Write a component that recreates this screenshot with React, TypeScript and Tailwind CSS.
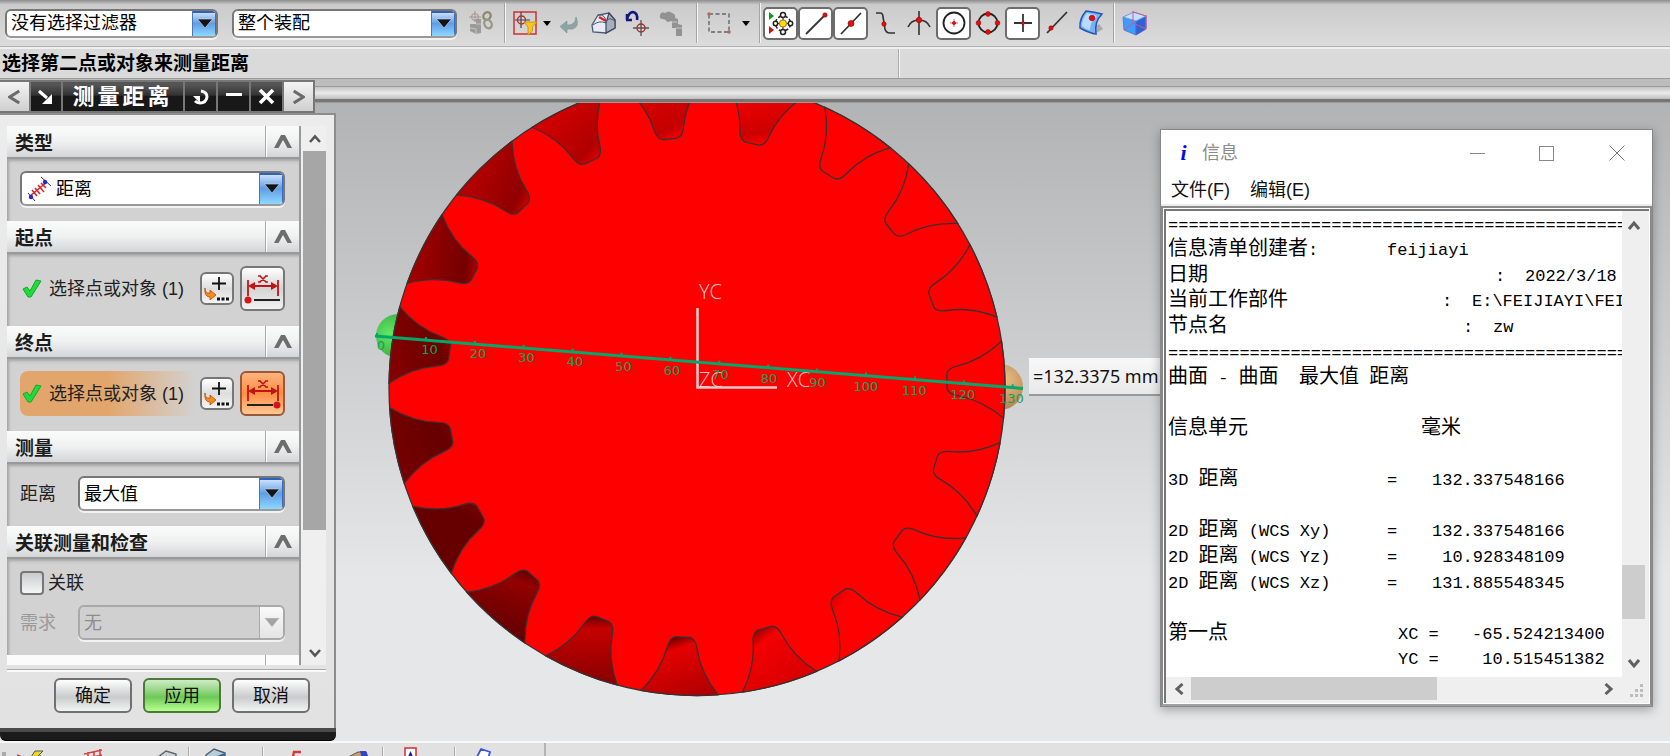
import React from 'react';

const UI_FONT = 'font-[Liberation_Sans,Noto_Sans_CJK_SC,sans-serif]';

/* ---------- gear data ---------- */

const TEETH = 19;
const STEP = 360 / TEETH;
const GAP_PATH =
  'M-38.5,-305.6 Q-20,-285 -15,-261 Q-13,-251 -7,-250 L7,-250 Q13,-251 15,-261 Q20,-285 38.5,-305.6 A308,308 0 0 0 -38.5,-305.6 Z';

// [rim, near root, root]
const GAP_SHADES: [string, string, string][] = [
  ['#860000', '#6c0000', '#880000'],
  ['#a00000', '#740000', '#b00000'],
  ['#b60000', '#900000', '#cc0000'],
  ['#d20000', '#b00000', '#e00000'],
  ['#e00000', '#c40000', '#f80000'],
  ['#ff0000', '#cc0000', '#ff0000'],
  ['#ff0000', '#ff0000', '#ff0000'],
  ['#ff0000', '#ff0000', '#ff0000'],
  ['#ff0000', '#ff0000', '#ff0000'],
  ['#ff0000', '#ff0000', '#ff0000'],
  ['#ff0000', '#ff0000', '#ff0000'],
  ['#ff0000', '#ff0000', '#f80000'],
  ['#ff0000', '#ff0000', '#d80000'],
  ['#d80000', '#f40000', '#900000'],
  ['#b00000', '#e60000', '#600000'],
  ['#8c0000', '#c60000', '#600000'],
  ['#660000', '#940000', '#600000'],
  ['#660000', '#660000', '#780000'],
  ['#760000', '#660000', '#720000'],
];

const RULER = Array.from({ length: 14 }, (_, i) => i * 10);

/* ---------- shared controls ---------- */

interface ComboProps {
  label: string;
  value: string;
  className?: string;
  icon?: React.ReactNode;
  disabled?: boolean;
}

const Combo: React.FC<ComboProps> = ({ label, value, className = '', icon, disabled }) => (
  <div
    className={`relative flex items-stretch rounded-md border-2 overflow-hidden shadow-[0_2px_0_#f2f2f2] ${
      disabled ? 'border-[#a9a9a9] bg-[#d0d0d0]' : 'border-[#777] border-b-[#999] bg-white'
    } ${className}`}
  >
    {icon && <span className="flex items-center pl-1">{icon}</span>}
    <select
      aria-label={label}
      disabled={disabled}
      className={`flex-1 min-w-0 appearance-none bg-transparent outline-none pl-1 text-lg leading-none ${
        disabled ? 'text-[#8d8d8d]' : 'text-black'
      }`}
    >
      <option>{value}</option>
    </select>
    <span
      className={`pointer-events-none w-6 flex items-center justify-center border-l ${
        disabled
          ? 'border-[#aaa] bg-linear-to-b from-[#fafafa] to-[#e4e4e4]'
          : 'border-[#4778b8] bg-linear-to-b from-[#dce9fb] via-[#5f9ee6] via-50% to-[#8fd8ff] shadow-[inset_0_2px_0_#2f62bd,inset_-1px_0_0_#3a6cc0]'
      }`}
    >
      <svg width="16" height="11" viewBox="0 0 16 11">
        <path d="M0.5 1H15.5L8 10Z" fill={disabled ? '#a3a3a3' : '#141414'} stroke={disabled ? '#ddd' : '#cfe4fb'} strokeWidth="0.6" />
      </svg>
    </span>
  </div>
);

const Separator = () => <span className="w-[2px] h-10 border-l border-[#a5a5a5] bg-[#f4f4f4] shrink-0" />;

const MenuArrow = () => (
  <button aria-label="更多" className="w-[10px] flex justify-center">
    <svg width="8" height="5" viewBox="0 0 10 6">
      <path d="M0 0H10L5 6Z" fill="#000" />
    </svg>
  </button>
);

interface ToolProps {
  name: string;
  active?: boolean;
  children: React.ReactNode;
}

const Tool: React.FC<ToolProps> = ({ name, active, children }) => (
  <button
    aria-label={name}
    className={`shrink-0 flex items-center justify-center h-[33px] ${
      active ? 'w-[35px] rounded-[5px] border-2 border-[#6c6c6c] bg-white' : 'w-[34px]'
    }`}
  >
    <svg width="26" height="26" viewBox="0 0 26 26" fill="none" className="shrink-0">
      {children}
    </svg>
  </button>
);

const Dot = ({ x, y, r = 2.8 }: { x: number; y: number; r?: number }) => (
  <circle cx={x} cy={y} r={r} fill="#e01010" stroke="#a00000" strokeWidth="0.6" />
);

/* ---------- top bars ---------- */

const SelectionBar = () => (
  <div className="flex items-center h-[47px] pl-[5px] bg-linear-to-b from-[#8e8e8e] via-[#cbcbcb] via-10% to-[#dcdcdc] border-b border-[#b0b0b0]">
    <Combo label="选择过滤器" value="没有选择过滤器" className="w-[213px] h-[29px] mr-[14px]" />
    <Combo label="选择范围" value="整个装配" className="w-[225px] h-[29px]" />
    <div className="w-[47px] flex justify-center">
      <Tool name="装配范围">
        <path d="M2 14H8V9H13V23L8 24L2 21Z" fill="#9b9b9b" />
        <path d="M2 18L8 19V24M8 14H13" stroke="#c4c4c4" />
        <circle cx="7" cy="7" r="3.5" stroke="#b88" />
        <path d="M7 1V12M1 7H13" stroke="#999" />
        <ellipse cx="19" cy="6" rx="3.500" ry="4" stroke="#8b8b72" strokeWidth="2.400" transform="rotate(30 19 6)" />
        <ellipse cx="20" cy="14" rx="3.500" ry="4.500" stroke="#9a9a84" strokeWidth="2.400" transform="rotate(-30 20 14)" />
      </Tool>
    </div>
    <Separator />
    <span className="w-[2px]" />
    <Tool name="常规选择过滤器">
      <rect x="2" y="2" width="22" height="22" stroke="#d03a3a" strokeWidth="1.6" />
      <path d="M9 2V18M3 10H18" stroke="#444" strokeWidth="1.2" />
      <circle cx="9.500" cy="10" r="4" stroke="#b03030" strokeWidth="1.4" />
      <path d="M12 12H25L20.500 17V21L16 25V17Z" fill="#f7c51e" stroke="#c58e08" strokeWidth="0.8" />
    </Tool>
    <MenuArrow />
    <Tool name="返回">
      <path d="M20 7Q24 16 17 19H11V23L4 16.500L11 11V15Q19 16 20 7Z" fill="#92a3a3" stroke="#7e9090" strokeWidth="0.6" />
    </Tool>
    <Tool name="面">
      <path d="M2 15L8 5L19 3L25 10V18L16 23L3 22Z" fill="#e6ebf5" stroke="#4b5872" strokeWidth="1.3" />
      <path d="M16 23V13L19 3L25 10V18Z" fill="#a5afbe" stroke="#3c4557" strokeWidth="1.200" />
      <path d="M16 13Q17 8 21 9L25 11M16 13Q9 10 3 15M8 5Q16 4 16 13" stroke="#4b5872" />
      <path d="M9 7L16 11" stroke="#e02424" strokeWidth="2.400" />
    </Tool>
    <Tool name="撤销定位">
      <path d="M2 10H8M3 10V4M3 9Q5 2 9 2Q14 3 13 10" stroke="#15157c" strokeWidth="2.600" />
      <circle cx="17" cy="18" r="4" stroke="#c02020" strokeWidth="1.400" />
      <path d="M17 10V26M9 18H25" stroke="#555" strokeWidth="1.300" />
    </Tool>
    <Tool name="路径">
      <path d="M2 5Q3 1 7 3Q11 0 14 3Q18 4 17 8L20 9V14L24 15V26H18V18H14V11L9 12Q8 9 4 9Q1 8 2 5Z" fill="#929292" />
      <path d="M14 12H19M18 18H24" stroke="#c4c4c4" />
    </Tool>
    <span className="w-2" />
    <Separator />
    <span className="w-1" />
    <Tool name="矩形选择">
      <rect x="3" y="4" width="20" height="18" stroke="#666" strokeWidth="1.400" strokeDasharray="4 2.500" />
      <circle cx="3" cy="4" r="1.800" fill="#b66" />
      <circle cx="23" cy="22" r="1.800" fill="#b66" />
    </Tool>
    <span className="w-[5px]" />
    <MenuArrow />
    <span className="w-2" />
    <Separator />
    <span className="w-[2px]" />
    <Tool name="捕捉点" active>
      <path d="M1 2L6 6L1 10Z" fill="#0a9a20" />
      <path d="M1 16L6 20L1 24Z" fill="#d01010" />
      <path d="M15 3V24M5 13.500H25" stroke="#333" strokeWidth="1.200" />
      <circle cx="15" cy="13.500" r="7.500" stroke="#222" strokeWidth="1.500" strokeDasharray="4 2" />
      <circle cx="15" cy="13.500" r="3.600" fill="#ffd91c" stroke="#a07800" />
      <circle cx="15" cy="5" r="2.500" fill="#fff" stroke="#222" strokeWidth="1.500" />
      <circle cx="15" cy="22" r="2.500" fill="#fff" stroke="#222" strokeWidth="1.500" />
      <circle cx="7.500" cy="13.500" r="2.200" fill="#fff" stroke="#222" strokeWidth="1.500" />
      <circle cx="22.500" cy="13.500" r="2.200" fill="#fff" stroke="#222" strokeWidth="1.500" />
    </Tool>
    <Tool name="端点" active>
      <path d="M3 24L22 5" stroke="#333" strokeWidth="1.800" />
      <Dot x={22} y={5} r={2.2} />
    </Tool>
    <Tool name="中点" active>
      <path d="M3 24L23 3" stroke="#333" strokeWidth="1.800" />
      <Dot x={13} y={13.5} r={3} />
    </Tool>
    <Tool name="控制点">
      <path d="M4 3H8Q11 3 11 7L13 19Q14 23 18 23H23" stroke="#333" strokeWidth="1.600" />
      <Dot x={12} y={14} r={2.2} />
    </Tool>
    <Tool name="交点">
      <path d="M13 1V25M2 17Q5 10 13 10Q21 10 24 17" stroke="#333" strokeWidth="1.600" />
      <Dot x={13} y={10} r={2.8} />
    </Tool>
    <Tool name="圆弧中心" active>
      <circle cx="13" cy="13" r="10.500" stroke="#222" strokeWidth="1.800" />
      <path d="M13 9V17M9 13H17" stroke="#c33" strokeWidth="0.8" />
      <Dot x={13} y={13} r={1.6} />
    </Tool>
    <Tool name="象限点">
      <circle cx="13" cy="13" r="9.500" stroke="#222" strokeWidth="1.800" />
      <Dot x={13} y={4} r={2.4} />
      <Dot x={13} y={22} r={2.4} />
      <Dot x={3.5} y={13} r={2.4} />
      <Dot x={22.5} y={13} r={2.4} />
    </Tool>
    <Tool name="现有点" active>
      <path d="M13 4V22M4 13H22" stroke="#333" strokeWidth="1.800" />
      <Dot x={13} y={13} r={1.6} />
    </Tool>
    <Tool name="曲线上的点">
      <path d="M3 23L23 2" stroke="#333" strokeWidth="1.800" />
      <Dot x={7} y={18} r={2.2} />
    </Tool>
    <Tool name="面上的点">
      <path d="M15 25L25 19L21 14L12 20Z" fill="#aaa" />
      <path d="M8 1Q17 2 24 4Q16 12 18 24Q11 23 2 18Q1 9 8 1Z" fill="#78b2f4" stroke="#2755b4" strokeWidth="1.500" />
      <path d="M9 3Q15 4 19 6Q12 12 12 20Q7 19 4 16Q4 9 9 3Z" fill="#b8dbff" />
      <Dot x={14} y={8} r={2.8} />
    </Tool>
    <span className="w-[5px]" />
    <Separator />
    <span className="w-[3px]" />
    <Tool name="小平面">
      <path d="M1 7L14 11V25L2 20Z" fill="#3c9cff" stroke="#5a7cd8" />
      <path d="M14 11L24 6V19L14 25Z" fill="#2c62d8" stroke="#5a64c8" />
      <path d="M1 7L12 2L24 6L14 11Z" fill="#c0e2ff" stroke="#7a94d8" />
      <path d="M11 1V13L24 19M24 5V19M11 13L2 20M11 2L24 6" stroke="#d0568c" />
    </Tool>
  </div>
);

const PromptBar = () => (
  <>
    <div className="flex h-[31px] border-t-2 border-[#efefef] bg-[#dadada]">
      <div className="w-[899px] border-r border-[#aaa] pl-[2px] flex items-center">
        <p className="text-[19px] leading-6 font-bold text-black whitespace-nowrap">选择第二点或对象来测量距离</p>
      </div>
      <div className="flex-1 border-l border-[#f6f6f6]" />
    </div>
    <div className="h-[9px] bg-[#bdbdbd] border-y border-[#999]" />
    <div className="h-3 bg-linear-to-b from-[#c4c4c4] via-[#ebebeb] to-[#bebebe]" />
    <div className="h-1 bg-[#777] border-b border-[#9a9a9a]" />
  </>
);

/* ---------- graphics area ---------- */

const Gear = () => (
  <svg width="1200" height="638" viewBox="0 103 1200 638" className="block">
    <defs>
      <radialGradient id="startBall" cx="0.3" cy="0.45" r="0.6">
        <stop offset="0" stopColor="#62ea62" />
        <stop offset="1" stopColor="#3aa844" />
      </radialGradient>
      <radialGradient id="endBall" cx="0.6" cy="0.35" r="0.6">
        <stop offset="0" stopColor="#e8c088" />
        <stop offset="1" stopColor="#b98652" />
      </radialGradient>
      {GAP_SHADES.map(([rim, near, root], i) => (
        <linearGradient key={i} id={`gap${i}`} gradientUnits="userSpaceOnUse" x1="-20" y1="-308" x2="4" y2="-248">
          <stop offset="0" stopColor={rim} />
          <stop offset="0.8" stopColor={near} />
          <stop offset="1" stopColor={root} />
        </linearGradient>
      ))}
    </defs>
    <circle cx="398" cy="336" r="22" fill="url(#startBall)" />
    <circle cx="1000" cy="387" r="23" fill="url(#endBall)" />
    <g transform="translate(697 387.5)">
      <circle r="308" fill="#ff0000" stroke="#333" strokeWidth="1.3" />
      {GAP_SHADES.map((_, i) => (
        <path
          key={i}
          d={GAP_PATH}
          transform={`rotate(${-82 + i * STEP})`}
          fill={`url(#gap${i})`}
          stroke="#3a3030"
          strokeWidth="1.3"
        />
      ))}
    </g>
    <path d="M697.5 308V387.500H777" fill="none" stroke="#dcc8c8" strokeWidth="2.600" />
    <g className="font-[Open_Sans,sans-serif] font-light" fontSize="20" fill="#f0cccc">
      <text x="699" y="299">YC</text>
      <text x="699" y="387">ZC</text>
      <text x="787" y="387">XC</text>
    </g>
    <path d="M375 336L1023 388.500" stroke="#00a86b" strokeWidth="3" />
    <g className="font-[DejaVu_Sans,sans-serif]" fontSize="13" textAnchor="middle" fill="#12a05c">
      {RULER.map((n, i) => (
        <g key={n}>
          <path d={`M${377 + i * 48.9} ${336 + i * 3.95}v-3`} stroke="#00a86b" strokeWidth="2" />
          <text x={381 + i * 48.5} y={350 + i * 4.1}>{n}</text>
        </g>
      ))}
    </g>
  </svg>
);

/* ---------- measure dialog ---------- */

interface SectionProps {
  title: string;
  children: React.ReactNode;
}

const Section: React.FC<SectionProps> = ({ title, children }) => (
  <section>
    <header className="flex h-[33px] border-b-2 border-[#999] bg-linear-to-b from-[#fbfbfb] via-[#eff1f1] to-[#d3d5d7]">
      <h2 className="flex-1 pl-2 pt-1 flex items-center text-[19px] leading-6 font-bold text-[#1c1c1c]">{title}</h2>
      <button aria-label={`折叠${title}`} className="w-[34px] border-l border-[#aaa] flex items-center justify-center shadow-[inset_1px_0_0_#fff]">
        <svg width="18" height="14" viewBox="0 0 18 14">
          <path d="M0 13L7 0H11L18 13H13.500L9 5L4.500 13Z" fill="#6d6d6d" />
        </svg>
      </button>
    </header>
    <div className="pt-3 pb-[15px] pl-[13px] pr-[14px] bg-[#d2d2d2] shadow-[inset_2px_2px_3px_#a4a4a4]">{children}</div>
  </section>
);

const CheckMark = () => (
  <svg width="20" height="20" viewBox="0 0 20 20" className="shrink-0">
    <path d="M1 10L5 8L8 12L14 1L19 2L9 18H6Z" fill="#1fdc3a" stroke="#12a82a" />
  </svg>
);

const PickRow = ({ active }: { active?: boolean }) => (
  <div className="flex items-center h-[45px]">
    <div
      className={`flex flex-1 items-center gap-[7px] h-full pl-[2px] rounded-lg whitespace-nowrap ${
        active ? 'bg-linear-to-r from-[#e2a66c] from-50% to-transparent' : ''
      }`}
    >
      <CheckMark />
      <span className="text-lg leading-6 text-[#222]">选择点或对象 (1)</span>
    </div>
    <button aria-label="点构造器" className="w-[34px] h-[33px] ml-1 mr-[6px] rounded-md border-2 border-[#777] bg-linear-to-b from-white via-[#ddd] to-[#f4f4f4]">
      <svg width="30" height="29" viewBox="0 0 30 29">
        <path d="M17 3V16M10 9.500H24" stroke="#111" strokeWidth="1.800" />
        <path d="M3 14Q3 20 8 19V16L14 21L8 26V23Q2 23 3 14Z" fill="#f58a1e" stroke="#b84a00" strokeWidth="0.8" />
        <path d="M15 25H18M19.500 25H22.500M24 25H27" stroke="#111" strokeWidth="3" />
      </svg>
    </button>
    <button
      aria-label={active ? '终点' : '起点'}
      className={`w-[45px] h-[45px] rounded-md border-2 ${
        active
          ? 'border-[#9a5a3a] bg-linear-to-b from-[#ffb27c] via-[#ff8f45] to-[#ffc793]'
          : 'border-[#777] bg-linear-to-b from-white via-[#d4d4d4] to-[#f2f2f2]'
      }`}
    >
      <svg width="41" height="41" viewBox="0 0 41 41" fill="none">
        <path d="M6 12V28M36 12V28M8 18H34" stroke="#c01414" strokeWidth="1.800" />
        <path d="M6 18L13 14V22ZM36 18L29 14V22Z" fill="#c01414" />
        <path d="M18 8L24 14M24 8L18 14M16 8H19M23 8H26M16 14H19M23 14H26" stroke="#c01414" strokeWidth="1.600" />
        <path d={active ? 'M5 32H31' : 'M12 32H38'} stroke="#222" strokeWidth="2" />
        <circle cx={active ? 35 : 6} cy="32" r="3.500" fill="#d81414" />
      </svg>
    </button>
  </div>
);

const DistanceIcon = () => (
  <svg width="26" height="26" viewBox="0 0 26 26" fill="none">
    <path d="M4 20L21 6M9 12L14 18M12 9L18 16M6 14L11 20M15 7L20 12" stroke="#d42a2a" strokeWidth="1.600" />
    <path d="M2 17L9 25M15 1L25 10" stroke="#333" />
    <circle cx="5" cy="21" r="2.200" fill="#2424d8" />
    <circle cx="19" cy="6" r="2.200" fill="#2424d8" />
  </svg>
);

const railDark = 'h-full flex items-center justify-center bg-linear-to-b from-[#555] from-10% via-[#333] via-45% to-[#181818] to-50% border-r-2 border-[#777]';
const railLight = 'h-full flex items-center justify-center bg-linear-to-b from-[#f4f4f4] to-[#cfcfcf]';

const DialogRail = () => (
  <div className="flex h-[33px] w-[315px] border-2 border-l-0 border-[#777]">
    <button aria-label="上一个" className={`${railLight} w-[31px] border-r-2 border-[#777]`}>
      <svg width="13" height="16" viewBox="0 0 15 18"><path d="M13 2L2 9L13 16" fill="none" stroke="#6a6a6a" strokeWidth="3.500" /></svg>
    </button>
    <button aria-label="固定" className={`${railDark} w-8`}>
      <svg width="16" height="16" viewBox="0 0 16 16"><path d="M1 2L9 9" stroke="#fff" strokeWidth="3" /><path d="M14 5V15H4Z" fill="#fff" /></svg>
    </button>
    <h1 className={`${railDark} flex-1 text-[22px] leading-none font-bold text-white gap-[3px] pr-1`}>
      <span>测</span><span>量</span><span>距</span><span>离</span>
    </h1>
    <button aria-label="重置" className={`${railDark} w-[33px]`}>
      <svg width="18" height="18" viewBox="0 0 18 18"><path d="M9 3Q15 4 15 9Q14 15 8 15Q5 15 3 13" fill="none" stroke="#fff" strokeWidth="3" /><path d="M1 8H8V15Z" fill="#fff" /></svg>
    </button>
    <button aria-label="最小化" className={`${railDark} w-[33px]`}>
      <span className="w-4 h-[3px] bg-white mb-1" />
    </button>
    <button aria-label="关闭" className={`${railDark} w-[33px]`}>
      <svg width="17" height="17" viewBox="0 0 17 17"><path d="M2 2L15 15M15 2L2 15" stroke="#fff" strokeWidth="3.600" /></svg>
    </button>
    <button aria-label="下一个" className={`${railLight} w-[29px]`}>
      <svg width="13" height="16" viewBox="0 0 15 18"><path d="M2 2L13 9L2 16" fill="none" stroke="#6a6a6a" strokeWidth="3.500" /></svg>
    </button>
  </div>
);

const actionButton = 'w-[78px] h-[35px] rounded-md border-2 text-lg leading-none text-[#111]';

const MeasureDialog = () => (
  <div className="absolute left-0 top-20 z-10">
    <DialogRail />
    <div className="w-[336px] border-t-2 border-r-2 border-[#8c8c8c] bg-linear-to-b from-[#ececec] to-[#e2e2e2] pt-[11px] pl-[7px] pr-2 pb-[15px]">
      <div className="flex h-[539px] overflow-hidden">
        <div className="flex-1 border-r-2 border-[#999]">
          <Section title="类型">
            <Combo label="类型" value="距离" icon={<DistanceIcon />} className="h-[35px]" />
          </Section>
          <Section title="起点">
            <PickRow />
          </Section>
          <Section title="终点">
            <PickRow active />
          </Section>
          <Section title="测量">
            <div className="flex items-center">
              <span className="w-[58px] text-lg leading-6 text-[#222]">距离</span>
              <Combo label="距离" value="最大值" className="flex-1 h-[35px]" />
            </div>
          </Section>
          <Section title="关联测量和检查">
            <label className="flex items-center gap-1 h-6 mb-[10px] text-lg leading-6 text-[#222]">
              <input type="checkbox" className="appearance-none w-6 h-6 rounded-[4px] border-2 border-[#777] bg-linear-to-b from-[#c9cbcd] to-[#f6f6f6]" />
              关联
            </label>
            <div className="flex items-center">
              <span className="w-[58px] text-lg leading-6 text-[#9a9a9a]">需求</span>
              <Combo label="需求" value="无" disabled className="flex-1 h-[35px]" />
            </div>
          </Section>
          <div className="flex h-[33px] justify-end bg-[#fbfbfb]">
            <span className="w-[34px] border-l border-[#aaa]" />
          </div>
        </div>
        <div className="w-[25px] pl-[2px] bg-[#efefef] flex flex-col items-center">
          <button aria-label="向上滚动" className="h-[25px]">
            <svg width="12" height="9" viewBox="0 0 12 9"><path d="M1 8L6 2.500L11 8" fill="none" stroke="#555" strokeWidth="2.600" /></svg>
          </button>
          <div className="w-[23px] h-[379px] bg-[#a6a6a6]" />
          <button aria-label="向下滚动" className="mt-auto h-6">
            <svg width="12" height="9" viewBox="0 0 12 9"><path d="M1 1L6 6.500L11 1" fill="none" stroke="#555" strokeWidth="2.600" /></svg>
          </button>
        </div>
      </div>
      <div className="mt-1 h-[3px] border-t border-[#aaa] bg-[#fafafa]" />
      <div className="flex justify-end gap-[11px] mt-[6px] pr-4">
        <button className={`${actionButton} border-[#707070] bg-linear-to-b from-white via-[#c9cbcc] via-55% to-[#f4f4f4]`}>确定</button>
        <button className={`${actionButton} border-[#4a7a3a] bg-linear-to-b from-[#cfeac6] via-[#6cc955] via-55% to-[#b8ff90]`}>应用</button>
        <button className={`${actionButton} border-[#707070] bg-linear-to-b from-white via-[#c9cbcc] via-55% to-[#f4f4f4]`}>取消</button>
      </div>
    </div>
    <div className="w-[336px] h-[13px] rounded-b-md bg-[#1b1b1b] border-t-4 border-t-[#4a4a4a] border-b border-b-black" />
  </div>
);

/* ---------- information window ---------- */

interface InfoLine {
  label?: string;
  labelWidth?: string;
  mark?: string;
  markWidth?: string;
  value?: string;
}

const RULE = '='.repeat(60);

const INFO_LINES: InfoLine[] = [
  { label: RULE },
  { label: '信息清单创建者:', labelWidth: 'w-[219px]', value: 'feijiayi' },
  { label: '日期', labelWidth: 'w-[327px]', mark: ':', markWidth: 'w-[30px]', value: '2022/3/18' },
  { label: '当前工作部件', labelWidth: 'w-[274px]', mark: ':', markWidth: 'w-[30px]', value: 'E:\\FEIJIAYI\\FEIJIAYI' },
  { label: '节点名', labelWidth: 'w-[295px]', mark: ':', markWidth: 'w-[30px]', value: 'zw' },
  { label: RULE },
  { label: '曲面 - 曲面  最大值 距离' },
  {},
  { label: '信息单元', labelWidth: 'w-[253px]', value: '毫米' },
  {},
  { label: '3D 距离', labelWidth: 'w-[219px]', mark: '=', markWidth: 'w-[45px]', value: '132.337548166' },
  {},
  { label: '2D 距离 (WCS Xy)', labelWidth: 'w-[219px]', mark: '=', markWidth: 'w-[45px]', value: '132.337548166' },
  { label: '2D 距离 (WCS Yz)', labelWidth: 'w-[219px]', mark: '=', markWidth: 'w-[45px]', value: ' 10.928348109' },
  { label: '2D 距离 (WCS Xz)', labelWidth: 'w-[219px]', mark: '=', markWidth: 'w-[45px]', value: '131.885548345' },
  {},
  { label: '第一点', labelWidth: 'w-[230px]', mark: 'XC =', markWidth: 'w-[74px]', value: '-65.524213400' },
  { label: '', labelWidth: 'w-[230px]', mark: 'YC =', markWidth: 'w-[74px]', value: ' 10.515451382' },
];

// CJK runs are set wider than the Latin ones, as in a two-cell terminal font
const Mixed = ({ text }: { text: string }) => (
  <>
    {text.split(/([\u4e00-\u9fff]+)/).map((run, i) => (
      <span key={i} className={i % 2 ? 'text-xl leading-none' : ''}>{run}</span>
    ))}
  </>
);

const InfoWindow = () => (
  <div className="absolute right-[17px] top-[129px] z-10 w-[493px] border border-[#888] bg-white shadow-[0_3px_10px_rgba(0,0,0,0.3)]">
    <div className="flex items-center h-[46px] pl-[10px]">
      <span className="w-[25px] text-center font-[Liberation_Serif,serif] text-[22px] leading-none font-bold italic text-[#0808f0] mr-[6px]">i</span>
      <h2 className="flex-1 text-lg leading-6 text-[#8c8c8c]">信息</h2>
      <button aria-label="最小化" className="w-[69px] h-10 flex items-center justify-center">
        <span className="w-[15px] h-px bg-[#888]" />
      </button>
      <button aria-label="最大化" className="w-[69px] h-10 flex items-center justify-center">
        <span className="w-[15px] h-[15px] border border-[#888]" />
      </button>
      <button aria-label="关闭" className="w-[71px] h-10 flex items-center justify-center">
        <svg width="16" height="16" viewBox="0 0 16 16"><path d="M0.5 0.5L15.500 15.500M15.500 0.5L0.5 15.500" stroke="#777" /></svg>
      </button>
    </div>
    <div className="flex items-center gap-5 h-[30px] pl-[10px] text-lg leading-6 text-[#111] border-b-2 border-[#ececec]">
      <button>文件(F)</button>
      <button>编辑(E)</button>
    </div>
    <div className="border-2 border-[#8a8a8a] border-b-[#a0a0a0] p-[1px]">
      <div className="border-t-2 border-l-2 border-[#777]">
        <div className="flex">
          <div className="flex-1 min-w-0 overflow-hidden pl-[2px] pt-[2px]">
            <div className="grid auto-rows-fr h-[460px] font-[Liberation_Mono,Noto_Sans_CJK_SC,monospace] text-[17px] leading-6 text-black whitespace-pre">
              {INFO_LINES.map((line, i) => (
                <div key={i} className="flex items-center">
                  <span className={`shrink-0 ${line.labelWidth ?? ''}`}><Mixed text={line.label ?? ''} /></span>
                  {line.mark && <span className={`shrink-0 ${line.markWidth}`}>{line.mark}</span>}
                  {line.value && <span><Mixed text={line.value} /></span>}
                </div>
              ))}
            </div>
            <div className="h-1" />
          </div>
          <div className="w-[27px] bg-[#efefef] flex flex-col items-center pr-1">
            <button aria-label="向上滚动" className="h-7">
              <svg width="12" height="10" viewBox="0 0 12 10"><path d="M1 9L6 3L11 9" fill="none" stroke="#606060" strokeWidth="3" /></svg>
            </button>
            <div className="mt-auto w-[23px] h-[54px] bg-[#cdcdcd]" />
            <button aria-label="向下滚动" className="mt-8 h-[26px] flex items-center">
              <svg width="12" height="10" viewBox="0 0 12 10"><path d="M1 1L6 7L11 1" fill="none" stroke="#606060" strokeWidth="3" /></svg>
            </button>
          </div>
        </div>
        <div className="flex items-center h-[26px] pb-[3px] bg-[#efefef]">
          <button aria-label="向左滚动" className="w-[25px] flex justify-center">
            <svg width="10" height="12" viewBox="0 0 10 12"><path d="M8.500 1L3 6L8.500 11" fill="none" stroke="#606060" strokeWidth="3" /></svg>
          </button>
          <div className="w-[246px] h-[23px] bg-[#cdcdcd]" />
          <button aria-label="向右滚动" className="ml-auto w-[27px] flex justify-center">
            <svg width="10" height="12" viewBox="0 0 10 12"><path d="M1.500 1L7 6L1.500 11" fill="none" stroke="#606060" strokeWidth="3" /></svg>
          </button>
          <svg width="27" height="23" viewBox="0 0 27 23" fill="#bdbdbd">
            <path d="M18 7h3v3h-3zM13 12h3v3h-3zM18 12h3v3h-3zM8 17h3v3H8zM13 17h3v3h-3zM18 17h3v3h-3z" />
          </svg>
        </div>
      </div>
    </div>
  </div>
);

/* ---------- bottom bar ---------- */

const BottomTool = ({ name, children }: { name: string; children: React.ReactNode }) => (
  <button aria-label={name} className="w-[34px] shrink-0 flex justify-center">
    <svg width="26" height="24" viewBox="0 0 26 24" fill="none">{children}</svg>
  </button>
);

const BottomRule = () => <span className="w-[2px] h-6 border-l border-[#aaa] bg-[#f4f4f4] shrink-0" />;

const BottomBar = () => (
  <div className="flex h-[15px] items-start overflow-hidden bg-[#e1e1e1] border-t-2 border-[#f8f8f8]">
    <div className="w-[546px] flex items-start pt-[4px] pl-[2px] border-r-2 border-[#b4b4b4] h-full">
      <span className="w-1 h-1 bg-[#aaa] mt-[5px]" />
      <span className="w-[7px]" />
      <BottomTool name="草图">
        <path d="M0 8L10 12L6 9" stroke="#d03030" strokeWidth="1.500" />
        <path d="M18 4H26L21 9H24L12 16L17 10H14Z" fill="#e8d820" stroke="#555" />
      </BottomTool>
      <span className="w-[27px]" />
      <BottomTool name="阵列">
        <path d="M6 7L24 3M7 12L24 8M10 5V14M16 4V14M22 2V14" stroke="#d84040" strokeWidth="1.600" />
      </BottomTool>
      <span className="w-[43px]" />
      <BottomTool name="体">
        <path d="M3 10L11 4L21 7V16H3Z" fill="#cdd4d8" stroke="#5a6468" strokeWidth="1.400" />
      </BottomTool>
      <span className="w-[3px]" />
      <BottomRule />
      <span className="w-[7px]" />
      <BottomTool name="球">
        <path d="M5 8L13 2L24 6V16H5Z" fill="#b6ccd8" stroke="#4a5a68" strokeWidth="1.400" />
        <path d="M13 10L24 6V16H13Z" fill="#406488" />
      </BottomTool>
      <span className="w-[31px]" />
      <BottomRule />
      <span className="w-[11px]" />
      <BottomTool name="尺寸">
        <path d="M22 5H15L13 14" stroke="#d03a3a" strokeWidth="2.400" />
      </BottomTool>
      <span className="w-[33px]" />
      <BottomTool name="编辑">
        <path d="M4 9L12 5H20L22 14H4Z" fill="#c8a070" stroke="#555" />
        <path d="M14 4L20 4L24 13H16Z" fill="#3444c8" />
      </BottomTool>
      <span className="w-[6px]" />
      <BottomRule />
      <span className="w-[12px]" />
      <BottomTool name="注释">
        <rect x="5" y="1" width="11" height="16" fill="#fff" stroke="#d03a3a" strokeWidth="1.600" />
        <path d="M10.500 4L14 12H7Z" fill="#222288" />
      </BottomTool>
      <span className="w-[24px]" />
      <BottomRule />
      <span className="w-2" />
      <BottomTool name="视图">
        <path d="M9 10L13 2L22 5L19 15H7Z" fill="#fff" stroke="#3c50e0" strokeWidth="1.800" />
        <path d="M4 10L8 14" stroke="#333" strokeWidth="2" />
      </BottomTool>
    </div>
  </div>
);

const App: React.FC = () => (
  <div className={`relative flex flex-col h-screen min-w-[900px] overflow-hidden ${UI_FONT}`}>
    <SelectionBar />
    <PromptBar />
    <main className="relative flex-1 min-h-0 overflow-hidden bg-linear-to-b from-[#b2b3b4] via-[#e6e7e9] via-75% to-[#e6e7e9]">
      <Gear />
      <div className="absolute left-[1029px] top-[255px] h-[38px] w-[160px] flex items-center pl-1 border-b-2 border-[#999] bg-linear-to-b from-[#f8f8f8] to-[#e9e9e9] font-[Noto_Sans,sans-serif] text-lg leading-6 text-[#111] whitespace-nowrap">
        =132.3375 mm
      </div>
    </main>
    <BottomBar />
    <MeasureDialog />
    <InfoWindow />
  </div>
);

export default App;
